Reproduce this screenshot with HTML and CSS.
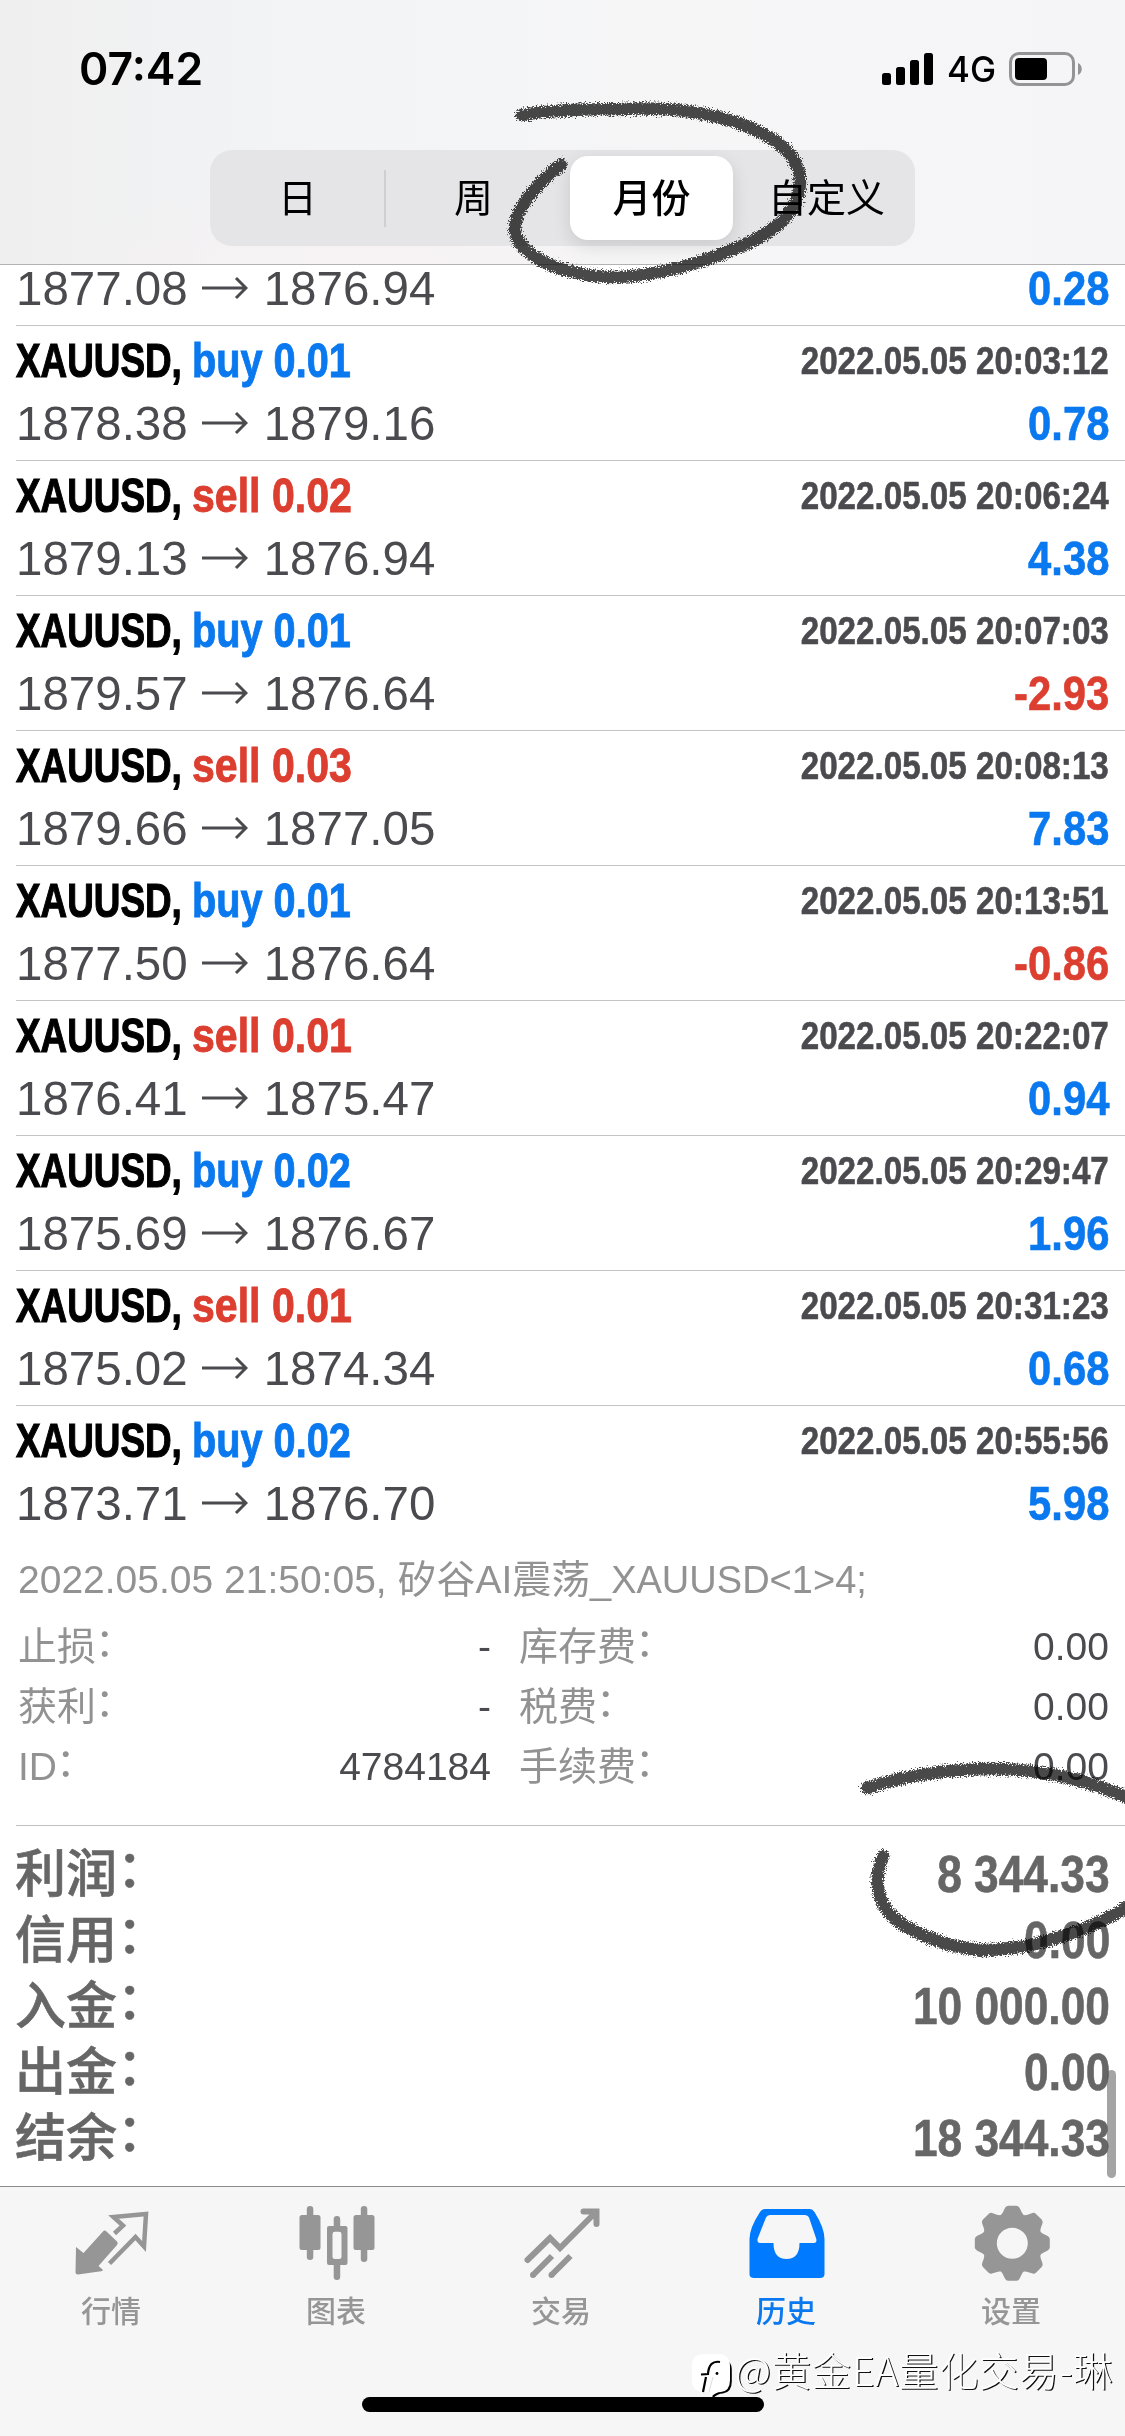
FILE: index.html
```html
<!DOCTYPE html>
<html lang="zh-CN">
<head>
<meta charset="utf-8">
<title>历史</title>
<link rel="stylesheet" href="styles.css">
</head>
<body>
<div class="screen">
  <header class="header">
    <div class="status">
      <span class="clock">07:42</span>
      <div class="status-right">
        <svg class="signal" width="52" height="34" viewBox="0 0 52 34"><rect x="0" y="21" width="9" height="12" rx="2.5"/><rect x="14" y="15" width="9" height="18" rx="2.5"/><rect x="28" y="8" width="9" height="25" rx="2.5"/><rect x="42" y="1" width="9" height="32" rx="2.5"/></svg>
        <span class="net">4G</span>
        <svg class="battery" width="74" height="34" viewBox="0 0 74 34"><rect x="1.5" y="1.5" width="63" height="31" rx="8.5" fill="none" stroke="#949496" stroke-width="3"/><rect x="6" y="6" width="32" height="22" rx="4"/><path d="M69 11c5 2 5 10 0 12z" fill="#949496"/></svg>
      </div>
    </div>
    <nav class="segments">
      <span class="segment">日</span>
      <span class="segment divided">周</span>
      <span class="segment active">月份</span>
      <span class="segment">自定义</span>
    </nav>
  </header>

  <main class="history">
    <section class="deal clipped"><div class="line prices"><span>1877.08</span><svg class="arrow" viewBox="0 0 46 24"><path d="M0 12H44M34 2L44 12L34 22"/></svg><span>1876.94</span><b class="profit gain">0.28</b></div></section>
    <section class="deal"><div class="line title"><b class="symbol">XAUUSD,</b><b class="side gain">buy 0.01</b><b class="time">2022.05.05 20:03:12</b></div><div class="line prices"><span>1878.38</span><svg class="arrow" viewBox="0 0 46 24"><path d="M0 12H44M34 2L44 12L34 22"/></svg><span>1879.16</span><b class="profit gain">0.78</b></div></section>
    <section class="deal"><div class="line title"><b class="symbol">XAUUSD,</b><b class="side sell loss">sell 0.02</b><b class="time">2022.05.05 20:06:24</b></div><div class="line prices"><span>1879.13</span><svg class="arrow" viewBox="0 0 46 24"><path d="M0 12H44M34 2L44 12L34 22"/></svg><span>1876.94</span><b class="profit gain">4.38</b></div></section>
    <section class="deal"><div class="line title"><b class="symbol">XAUUSD,</b><b class="side gain">buy 0.01</b><b class="time">2022.05.05 20:07:03</b></div><div class="line prices"><span>1879.57</span><svg class="arrow" viewBox="0 0 46 24"><path d="M0 12H44M34 2L44 12L34 22"/></svg><span>1876.64</span><b class="profit loss">-2.93</b></div></section>
    <section class="deal"><div class="line title"><b class="symbol">XAUUSD,</b><b class="side sell loss">sell 0.03</b><b class="time">2022.05.05 20:08:13</b></div><div class="line prices"><span>1879.66</span><svg class="arrow" viewBox="0 0 46 24"><path d="M0 12H44M34 2L44 12L34 22"/></svg><span>1877.05</span><b class="profit gain">7.83</b></div></section>
    <section class="deal"><div class="line title"><b class="symbol">XAUUSD,</b><b class="side gain">buy 0.01</b><b class="time">2022.05.05 20:13:51</b></div><div class="line prices"><span>1877.50</span><svg class="arrow" viewBox="0 0 46 24"><path d="M0 12H44M34 2L44 12L34 22"/></svg><span>1876.64</span><b class="profit loss">-0.86</b></div></section>
    <section class="deal"><div class="line title"><b class="symbol">XAUUSD,</b><b class="side sell loss">sell 0.01</b><b class="time">2022.05.05 20:22:07</b></div><div class="line prices"><span>1876.41</span><svg class="arrow" viewBox="0 0 46 24"><path d="M0 12H44M34 2L44 12L34 22"/></svg><span>1875.47</span><b class="profit gain">0.94</b></div></section>
    <section class="deal"><div class="line title"><b class="symbol">XAUUSD,</b><b class="side gain">buy 0.02</b><b class="time">2022.05.05 20:29:47</b></div><div class="line prices"><span>1875.69</span><svg class="arrow" viewBox="0 0 46 24"><path d="M0 12H44M34 2L44 12L34 22"/></svg><span>1876.67</span><b class="profit gain">1.96</b></div></section>
    <section class="deal"><div class="line title"><b class="symbol">XAUUSD,</b><b class="side sell loss">sell 0.01</b><b class="time">2022.05.05 20:31:23</b></div><div class="line prices"><span>1875.02</span><svg class="arrow" viewBox="0 0 46 24"><path d="M0 12H44M34 2L44 12L34 22"/></svg><span>1874.34</span><b class="profit gain">0.68</b></div></section>
    <section class="deal open"><div class="line title"><b class="symbol">XAUUSD,</b><b class="side gain">buy 0.02</b><b class="time">2022.05.05 20:55:56</b></div><div class="line prices"><span>1873.71</span><svg class="arrow" viewBox="0 0 46 24"><path d="M0 12H44M34 2L44 12L34 22"/></svg><span>1876.70</span><b class="profit gain">5.98</b></div></section>

    <section class="details">
      <p class="comment">2022.05.05 21:50:05, 矽谷AI震荡<span class="code">_XAUUSD&lt;1&gt;4;</span></p>
      <dl class="fields">
        <dt>止损<i>：</i></dt><dd>-</dd><dt>库存费<i>：</i></dt><dd>0.00</dd>
        <dt>获利<i>：</i></dt><dd>-</dd><dt>税费<i>：</i></dt><dd>0.00</dd>
        <dt>ID<i>：</i></dt><dd>4784184</dd><dt>手续费<i>：</i></dt><dd>0.00</dd>
      </dl>
    </section>

    <section class="summary">
      <div class="total"><span>利润<i>：</i></span><b>8 344.33</b></div>
      <div class="total"><span>信用<i>：</i></span><b>0.00</b></div>
      <div class="total"><span>入金<i>：</i></span><b>10 000.00</b></div>
      <div class="total"><span>出金<i>：</i></span><b>0.00</b></div>
      <div class="total"><span>结余<i>：</i></span><b>18 344.33</b></div>
    </section>
  </main>

  <footer class="tabs">
    <a class="tab"><svg class="icon" viewBox="0 0 80 80"><path d="M3 44L10.500 50L30 28.500Q31.500 26.500 33.500 28.500L44 38.500Q45.500 40 44 42L25.500 63L29.500 66.500Q30.500 67.800 28 68.200L5 71.500Q2.500 71.500 2.500 69.500Z" fill="#969696"/><path d="M41.500 30.500L50 22.500L40.500 14L73 11L71 43.500L62.500 34L36.500 60.500" fill="none" stroke="#969696" stroke-width="4.500"/></svg><span>行情</span></a>
    <a class="tab"><svg class="icon" viewBox="0 0 80 80"><g fill="#969696"><rect x="1.500" y="12" width="21" height="35" rx="2.500"/><rect x="8.800" y="3" width="6.500" height="54" rx="3.200"/><rect x="55.500" y="12" width="21" height="35" rx="2.500"/><rect x="62.800" y="3" width="6.500" height="56" rx="3.200"/><rect x="35.700" y="13" width="6.500" height="14" rx="3.200"/><rect x="35.700" y="58" width="6.500" height="19" rx="3.200"/><path fill-rule="evenodd" d="M31 23H47.500Q49.500 23 49.500 25V60Q49.500 62 47.500 62H31Q29 62 29 60V25Q29 23 31 23ZM37 28.700Q34.500 28.700 34.500 31V54Q34.500 56 37 56H41Q43.500 56 43.500 54V31Q43.500 28.700 41 28.700Z"/></g></svg><span>图表</span></a>
    <a class="tab"><svg class="icon" viewBox="0 0 80 80"><g fill="none" stroke="#969696" stroke-width="6"><path d="M4.500 57L27 35L37 45L73 9M60.500 8.500H73.500V21" stroke-linecap="round"/><path d="M29 53L10 72M47.500 53L28.500 72"/></g><g fill="#969696"><circle cx="10" cy="72" r="3"/><circle cx="28.500" cy="72" r="3"/></g></svg><span>交易</span></a>
    <a class="tab current"><svg class="icon" viewBox="0 0 80 80"><path fill="#007aff" fill-rule="evenodd" d="M17 6H62Q64.500 6 66.500 9Q76.500 25 76.500 36V71Q76.500 75 72 75H6Q1.500 75 1.500 71V36Q1.500 25 12 9Q14 6 17 6ZM22 12Q19 12 18 14.500L9.500 36Q9 40 12 40H25.500Q25.500 56 38.500 56Q51.500 56 51.500 40H66Q69 40 68.300 36L61 14.500Q60 12 57 12Z"/></svg><span>历史</span></a>
    <a class="tab"><svg class="icon" viewBox="0 0 80 80"><g fill="#969696" transform="translate(39.300 40.300)"><circle r="23" fill="none" stroke="#969696" stroke-width="15"/><g id="teeth"><path id="tooth" d="M-12-27Q-9-31-7.500-35Q-6.500-37.500-4-37.500H4Q6.500-37.500 7.500-35Q9-31 12-27Z"/><use href="#tooth" transform="rotate(45)"/><use href="#tooth" transform="rotate(90)"/><use href="#tooth" transform="rotate(135)"/></g><use href="#teeth" transform="rotate(180)"/></g></svg><span>设置</span></a>
  </footer>

  <div class="home-bar"></div>
  <div class="scroll-thumb"></div>

  <div class="credit">
    <svg width="42" height="46" viewBox="0 0 42 46"><path fill="#000" transform="translate(1.800 1.500)" d="M30 3Q38 6 38 14V26Q38 37 29 38Q24 38 19 43L18 38Z"/><path fill="#fff" d="M12 0H26Q38 0 38 12V26Q38 37 29 38Q24 38 19 43L18 38H12Q0 38 0 26V12Q0 0 12 0Z"/><path d="M28 8Q17 6 16 20L9 20.500M14 23L11 38" fill="none" stroke="#000" stroke-width="2.200"/><path d="M21 23L17 38" fill="none" stroke="#ddd" stroke-width="1"/><circle cx="25" cy="19.500" r="1.400"/></svg>
    <span>@黄金EA量化交易-琳</span>
  </div>

  <svg class="pen" viewBox="0 0 1125 2436">
    <filter id="crayon" filterUnits="userSpaceOnUse" x="0" y="0" width="1125" height="2436"><feTurbulence type="fractalNoise" baseFrequency="0.8" numOctaves="2" seed="4"/><feDisplacementMap in="SourceGraphic" scale="9" xChannelSelector="R" yChannelSelector="G"/></filter>
    <g filter="url(#crayon)">
      <path d="M522 115C545 111 580 109 620 109C665 107 705 112 735 122C775 136 800 154 800 182C800 217 764 239 724 253C689 267 650 277 611 277C561 275 519 257 515 230C514 210 536 184 561 165"/>
      <path d="M867 1788C907 1775 952 1769 992 1769C1042 1769 1087 1779 1137 1802M1137 1901C1117 1914 1092 1927 1069 1934C1037 1945 1012 1950 982 1950C947 1948 907 1932 889 1913C876 1896 874 1877 883 1856"/>
    </g>
  </svg>
</div>
</body>
</html>
```
FILE: styles.css
```css
* { box-sizing: border-box; }

body {
  margin: 0;
  background: #fff;
  font-family: "Liberation Sans", "Noto Sans CJK SC", sans-serif;
}

i { font-style: normal; }

.screen {
  position: relative;
  display: flex;
  flex-direction: column;
  width: 1125px;
  height: 2436px;
  overflow: hidden;
}

.header {
  display: flex;
  flex: none;
  flex-direction: column;
  height: 265px;
  border-bottom: 1px solid #b2b2b4;
  background:
    radial-gradient(ellipse 320px 90px at 370px 264px, #f7f2f3, transparent),
    linear-gradient(90deg, #efefef, #f3f4f6 28%, #f6f6f7 60%, #f5f5f8);
}

.status {
  display: flex;
  justify-content: space-between;
  height: 150px;
  padding: 42px 42px 0 79px;
}

.clock {
  font: 600 44.5px/54px Inter, sans-serif;
}

.status-right {
  display: flex;
  align-items: center;
  gap: 13px;
  height: 54px;
}

.net {
  width: 49px;
  font: 500 36px/56px Inter, sans-serif;
  transform: scaleX(0.97);
  transform-origin: left;
}

.segments {
  display: grid;
  grid-template-columns: 175px 177px 176px 177px;
  align-items: center;
  width: 705px;
  height: 96px;
  margin-left: 210px;
  border-radius: 22px;
  background: #e5e5e7;
  font-size: 39px;
  line-height: 56px;
  text-align: center;
}

.segment { padding-top: 1px; }

.divided {
  border-left: 2px solid #cfcfd1;
  transform: translateX(-1px);
}

.active {
  height: 84px;
  margin: 0 5px 0 8px;
  border-radius: 18px;
  background: #fff;
  box-shadow: 0 6px 18px rgba(0, 0, 0, 0.12);
  font-weight: 500;
  line-height: 84px;
}

.history {
  flex: 1;
}

.deal {
  height: 135px;
  margin-left: 16px;
  padding: 3px 16px 0 0;
  border-bottom: 1px solid #c4c4c6;
}

.clipped {
  height: 61px;
  padding-top: 0;
}

.open { border-color: transparent; }

.line {
  display: flex;
  align-items: flex-start;
  white-space: nowrap;
}

.title {
  height: 64px;
  font-size: 49px;
  line-height: 62px;
}

.symbol {
  width: 176px;
  transform: scaleX(0.752);
  transform-origin: left;
  -webkit-text-stroke: 1.2px currentColor;
}

.side {
  flex: 1;
  transform: scaleX(0.81);
  transform-origin: left;
  -webkit-text-stroke: 0.9px currentColor;
}

.sell { transform: scaleX(0.838); }

.time {
  color: #4b4b4f;
  font-size: 39.5px;
  transform: scaleX(0.84);
  transform-origin: right;
  -webkit-text-stroke: 0.6px currentColor;
}

.prices {
  height: 62px;
  color: #4b4b4f;
  font-size: 47.5px;
  line-height: 62px;
}

.clipped .prices {
  height: 48px;
  line-height: 48px;
}

.arrow {
  width: 46px;
  height: 24px;
  margin: 18px 16px 0 14px;
  fill: none;
  stroke: #4b4b4f;
  stroke-width: 3;
}

.clipped .arrow { margin-top: 11px; }

.profit {
  margin-left: auto;
  transform: scaleX(0.88);
  transform-origin: right;
  -webkit-text-stroke: 0.6px currentColor;
}

.gain { color: #0a78ee; }
.loss { color: #dc3e2f; }

.details {
  height: 285px;
  margin-left: 16px;
  padding: 9px 16px 0 2px;
  border-bottom: 1px solid #c0c0c2;
  color: #929292;
  font-size: 39px;
  line-height: 60px;
}

.comment {
  height: 67px;
  margin: 0;
  white-space: nowrap;
}

.code {
  display: inline-block;
  transform: scaleX(0.975);
  transform-origin: left;
}

.fields {
  display: grid;
  grid-template-columns: 140px 333px 200px 1fr;
  margin: 0;
}

.fields dt:nth-of-type(even) { padding-left: 28px; }

.fields i {
  display: inline-block;
  transform: translate(-1px, -4px);
}

.fields dd {
  margin: 0;
  color: #4b4b4f;
  text-align: right;
}

.summary {
  padding: 16px 15px 0 15px;
  color: #666;
  font-size: 51px;
  line-height: 66px;
}

.total {
  display: flex;
  justify-content: space-between;
  height: 66px;
}

.total span {
  font-weight: 500;
  -webkit-text-stroke: 0.6px currentColor;
}

.total i {
  display: inline-block;
  transform: translate(0, -5px);
}

.total b {
  transform: scaleX(0.868);
  transform-origin: right;
  -webkit-text-stroke: 0.6px currentColor;
}

.tabs {
  display: grid;
  flex: none;
  grid-template-columns: repeat(5, 1fr);
  height: 250px;
  border-top: 1px solid #8c8c8e;
  background: #f6f6f6;
}

.tab {
  display: flex;
  flex-direction: column;
  align-items: center;
  padding-top: 16px;
  color: #969696;
  font-size: 30px;
  font-weight: 500;
  line-height: 40px;
}

.tab span { transform: translateX(-1.5px); }

.icon {
  width: 80px;
  height: 80px;
  margin-bottom: 9px;
}

.current { color: #0a78ee; }

.home-bar {
  position: absolute;
  bottom: 24px;
  left: 362px;
  width: 402px;
  height: 15px;
  border-radius: 8px;
  background: #000;
}

.scroll-thumb {
  position: absolute;
  top: 2070px;
  right: 9px;
  width: 9px;
  height: 108px;
  border-radius: 5px;
  background: rgba(90, 90, 90, 0.55);
}

.credit {
  position: absolute;
  top: 2342px;
  left: 692px;
  display: flex;
  align-items: flex-start;
  gap: 1px;
  color: #fff;
  font: 300 39.5px/54px "Noto Sans CJK SC", sans-serif;
  letter-spacing: 0.6px;
  text-shadow: 1.2px 1.2px 0 #111;
  white-space: nowrap;
}

.credit svg { margin-top: 12px; }

.pen {
  position: absolute;
  inset: 0;
  width: 1125px;
  height: 2436px;
  fill: none;
  stroke: #4a4a4a;
  stroke-width: 12.5;
  stroke-linecap: round;
  mix-blend-mode: multiply;
}
```
